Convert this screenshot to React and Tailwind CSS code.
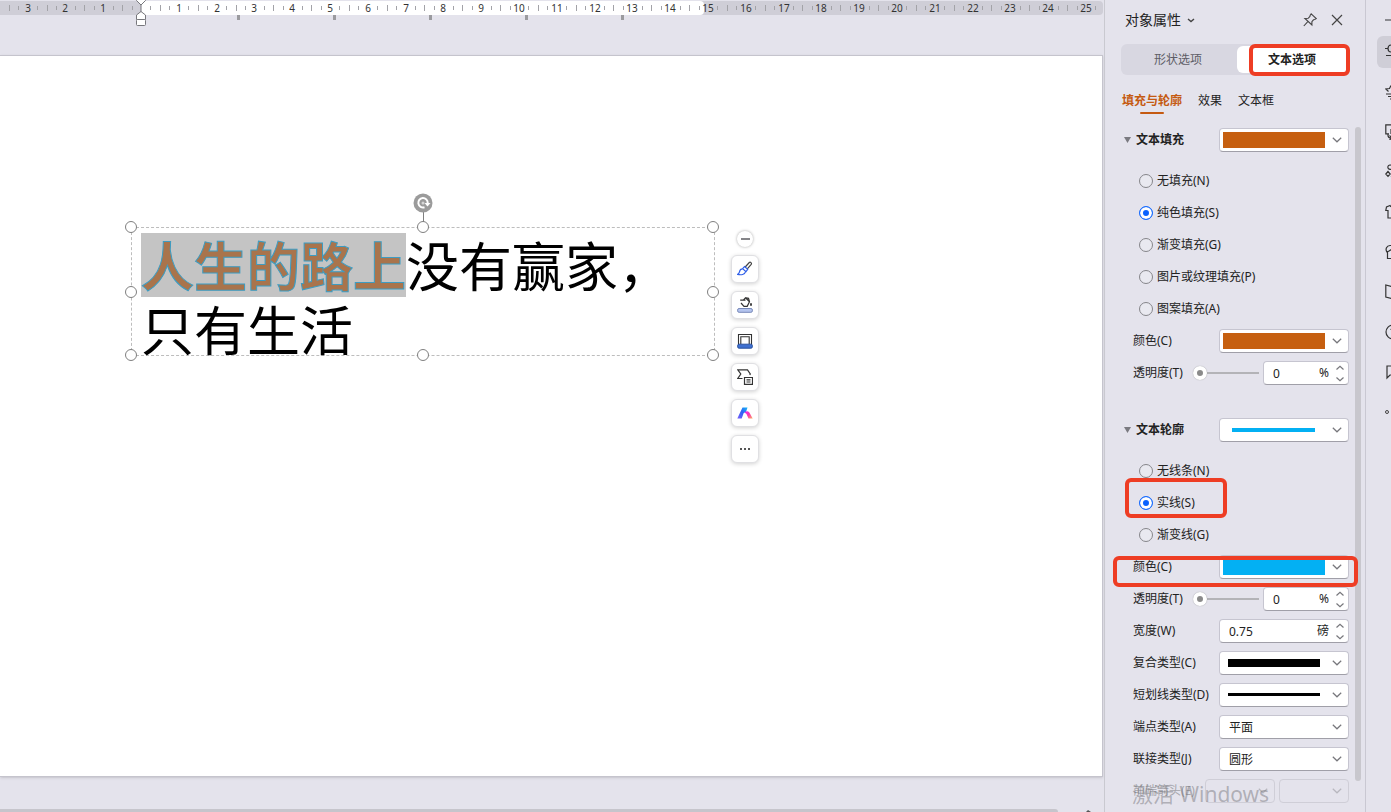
import { useState } from 'react';

const CM = 37.8;
const RULER_ZERO = 141;
const RULER_UNITS = Array.from({ length: 30 }, (_, i) => i - 4);
const TAB_STOPS = [237, 333, 429, 525, 621];

const HANDLES = [
  '-left-[7px] -top-[7px]',
  'left-[285px] -top-[7px]',
  '-right-[5px] -top-[7px]',
  '-left-[7px] top-[58px]',
  '-right-[5px] top-[58px]',
  '-left-[7px] -bottom-[6px]',
  'left-[285px] -bottom-[6px]',
  '-right-[5px] -bottom-[6px]',
];

function Ruler() {
  return (
    <div className="relative mr-px h-[15px] pt-px">
      <div className="relative h-[14px] overflow-hidden rounded-r bg-[#cfced7]">
        <div className="absolute inset-y-0 left-[141px] w-[563px] rounded-r bg-white" />
        {RULER_UNITS.map((n) => {
          const x = RULER_ZERO + n * CM;
          return (
            <div key={n}>
              {n !== 0 && n > -4 && (
                <span
                  className="absolute top-0 w-6 -translate-x-1/2 text-center text-[10px] leading-[14px] text-[#333]"
                  style={{ left: Math.round(x) }}
                >
                  {Math.abs(n)}
                </span>
              )}
              <i className="absolute top-[5px] h-1 w-px bg-[#a3a3a8]" style={{ left: Math.round(x + CM / 4) }} />
              <i className="absolute top-1 h-[6px] w-px bg-[#a3a3a8]" style={{ left: Math.round(x + CM / 2) }} />
              <i className="absolute top-[5px] h-1 w-px bg-[#a3a3a8]" style={{ left: Math.round(x + (CM * 3) / 4) }} />
            </div>
          );
        })}
      </div>
      {TAB_STOPS.map((x) => (
        <i key={x} className="absolute top-[15px] h-[5px] w-[3px] bg-[#9b9b9f]" style={{ left: x }} />
      ))}
      {/* Indent markers */}
      <svg className="absolute left-[136px] top-0 z-10" width="10" height="26" fill="#fff" stroke="#77777c">
        <path d="M5 4v10" />
        <path d="M.5-1v1.5L5 5 9.500.5V-1z" />
        <path d="M.5 19.500V15L5 11.500 9.500 15v4.500z" />
        <rect x=".5" y="19.500" width="9" height="6" rx="1" />
      </svg>
    </div>
  );
}

function ToolButton({ label, children }) {
  return (
    <button
      aria-label={label}
      className="flex size-7 items-center justify-center rounded-md border border-[#e0e0e3] bg-white shadow-[0_1px_4px_rgba(0,0,0,0.18)]"
    >
      {children}
    </button>
  );
}

function FloatingToolbar() {
  return (
    <div className="absolute left-[731px] top-[175px] flex flex-col items-center gap-2">
      <button
        aria-label="收起"
        className="flex size-4 items-center justify-center rounded-full bg-white shadow-[0_0_3px_rgba(0,0,0,0.35)]"
      >
        <span className="h-[2px] w-[9px] bg-[#858589]" />
      </button>
      <ToolButton label="格式刷">
        <svg width="16" height="16" viewBox="0 0 16 16" fill="none" stroke="#444" strokeWidth="1.2">
          <path d="M8.200 6 12.300 1.500c1-.9 2.800.6 1.900 1.900L10.300 7.900" />
          <path stroke="#2f5fe8" d="M7.500 5.500l3.200 2.900-1.700 2.200-3.400-3zM5.500 7.800C3.300 7.600 2.700 9.500 2.400 11.200c-.2 1-.8 1.700-1.800 2.100 3.400 1 7.300.5 8-2.800" />
        </svg>
      </ToolButton>
      <ToolButton label="形状填充">
        <svg width="16" height="16" viewBox="0 0 16 16" fill="none" stroke="#333" strokeWidth="1.200">
          <path d="M3.200 3.200h5.300M6.300 3.200 8.500.8l4 3.900-2.300 4.600H7L4 6M9 .9l2.500.3 1 3.400" />
          <path d="M14 6.200v2.600" strokeWidth="1.800" />
          <rect x=".6" y="11.500" width="14.800" height="3.800" rx="1.500" fill="#b4c4ee" stroke="#7788b8" strokeWidth="1" />
        </svg>
      </ToolButton>
      <ToolButton label="形状轮廓">
        <svg width="16" height="16" viewBox="0 0 16 16" fill="none" stroke="#333" strokeWidth="1.100">
          <path d="M1.500 12V1.500h13V12M3.800 11V3.800h8.400V11" />
          <rect x=".6" y="11.200" width="14.800" height="4" rx="1.500" fill="#3f70d0" stroke="#2b529f" strokeWidth="1" />
        </svg>
      </ToolButton>
      <ToolButton label="更改形状">
        <svg width="16" height="16" viewBox="0 0 16 16" fill="none" stroke="#333" strokeWidth="1.200">
          <path d="M5.500 9.500H.8L3.800 5 .8.800h9.700L13.300 5l-.6 1" />
          <path d="M7.500 8.500h8v6.800h-8zM9.500 10.800h4M9.500 13h4" />
        </svg>
      </ToolButton>
      <ToolButton label="智能助手">
        <svg width="16" height="16" viewBox="0 0 16 16">
          <defs>
            <linearGradient id="blue" x1="1" y1="0" x2="0" y2="1">
              <stop offset="0" stopColor="#18b9f5" />
              <stop offset=".45" stopColor="#2a63f5" />
              <stop offset="1" stopColor="#7a5cf8" />
            </linearGradient>
            <linearGradient id="pink" x1="0" y1="0" x2="1" y2="1">
              <stop offset="0" stopColor="#e22bf0" />
              <stop offset=".5" stopColor="#f837b0" />
              <stop offset="1" stopColor="#ffb25e" />
            </linearGradient>
          </defs>
          <path fill="url(#blue)" d="M5.500 2.500h5L9 7l-2.300 1-2 5.500H.3z" />
          <path fill="url(#pink)" d="M7.500 7.500c1.500-1.500 3.500-1.600 4.700-.3l3.500 6.300h-4.200L9.500 9z" />
        </svg>
      </ToolButton>
      <ToolButton label="更多">
        <svg width="12" height="4" fill="#555">
          <path d="M1 1h2v2H1zM5 1h2v2H5zM9 1h2v2H9z" />
        </svg>
      </ToolButton>
    </div>
  );
}

function TextBox() {
  return (
    <div className="absolute left-[131px] top-[171px] h-[129px] w-[584px] border border-dashed border-[#bdbdbd] pl-[9px] pt-[5px]">
      <p className="whitespace-nowrap text-[53px] leading-[68px] text-black">
        <span className="inline-block h-16 bg-[#c4c4c4] align-top font-bold text-[#a9744c] [-webkit-text-stroke:1px_#3d9cc2]">
          人生的路上
        </span>
        没有赢家，
      </p>
      <p className="-mt-1 whitespace-nowrap text-[53px] leading-[68px] text-black">只有生活</p>
      {HANDLES.map((pos) => (
        <i key={pos} className={`absolute size-3 rounded-full border border-[#7f7f7f] bg-white ${pos}`} />
      ))}
      <svg className="absolute -top-[35px] left-[281px]" width="20" height="30" fill="none">
        <path d="M10.500 18v11" stroke="#7f7f7f" />
        <circle cx="10" cy="10" r="9.500" fill="#9b9b9b" />
        <path d="M11.500 14.200A4.700 4.700 0 1 1 14.700 10" stroke="#fff" strokeWidth="2" />
        <path d="M11.500 10h6l-3 3.500z" fill="#fff" />
        <circle cx="10" cy="10" r="1.500" fill="#d5d5d5" />
      </svg>
    </div>
  );
}

function Chevron({ className = '' }) {
  return (
    <svg className={className} width="10" height="6" fill="none" stroke="#77777c" strokeWidth="1.200">
      <path d="M.8.800 5 4.800 9.200.8" />
    </svg>
  );
}

function Select({ id, label, options = [''], disabled = false, className = 'w-[130px]', children }) {
  return (
    <span className={`relative block h-6 ${className}`}>
      <select
        id={id}
        aria-label={label}
        disabled={disabled}
        className="block size-full appearance-none rounded border border-[#c6c5d0] border-b-[#a09fa8] bg-white pl-[9px] pr-6 pt-px text-xs text-[#222] disabled:border-[#cfced7] disabled:bg-transparent disabled:opacity-100"
      >
        {options.map((o) => (
          <option key={o}>{o}</option>
        ))}
      </select>
      {children}
      <Chevron className={`pointer-events-none absolute right-[7px] top-[9px] ${disabled ? 'opacity-40' : ''}`} />
    </span>
  );
}

function Swatch({ className }) {
  return <span className={`pointer-events-none absolute ${className}`} />;
}

function Spinner({ id, value, unit, className }) {
  const [text, setText] = useState(value);
  return (
    <span className={`flex h-6 items-center rounded border border-[#c6c5d0] border-b-[#a09fa8] bg-white pl-[9px] pr-[3px] ${className}`}>
      <input
        id={id}
        value={text}
        onChange={(e) => setText(e.target.value)}
        className="w-0 flex-1 bg-transparent pt-px text-xs outline-none"
      />
      <span className="mr-[6px]">{unit}</span>
      <span className="flex flex-col gap-[5px]">
        <button aria-label="增加">
          <svg className="block" width="10" height="6" fill="none" stroke="#77777c" strokeWidth="1.200">
            <path d="M1.500 4.500 5 1.200l3.500 3.300" />
          </svg>
        </button>
        <button aria-label="减少">
          <svg className="block" width="10" height="6" fill="none" stroke="#77777c" strokeWidth="1.200">
            <path d="M1.500 1.500 5 4.800l3.500-3.300" />
          </svg>
        </button>
      </span>
    </span>
  );
}

function Row({ id, label, children }) {
  return (
    <div className="relative flex h-8 items-center justify-between pl-3">
      <label htmlFor={id}>{label}</label>
      {children}
    </div>
  );
}

function Transparency({ id }) {
  return (
    <Row id={id} label="透明度(T)">
      <span className="flex items-center gap-1">
        <input
          type="range"
          defaultValue={0}
          aria-label="透明度"
          className="h-4 w-[66px] appearance-none bg-transparent [&::-webkit-slider-runnable-track]:h-[2px] [&::-webkit-slider-runnable-track]:bg-[#b3b3b7] [&::-webkit-slider-thumb]:-mt-[6px] [&::-webkit-slider-thumb]:size-[14px] [&::-webkit-slider-thumb]:appearance-none [&::-webkit-slider-thumb]:rounded-full [&::-webkit-slider-thumb]:border-4 [&::-webkit-slider-thumb]:border-white [&::-webkit-slider-thumb]:bg-[#8a8a8a] [&::-webkit-slider-thumb]:shadow-[0_0_1px_#8a8a90]"
        />
        <Spinner id={id} value="0" unit="%" className="w-[86px]" />
      </span>
    </Row>
  );
}

function RadioRow({ name, label, checked, onChange, children }) {
  return (
    <div className="relative flex h-8 items-center pl-[18px]">
      <label className="flex items-center gap-1">
        <input
          type="radio"
          name={name}
          checked={checked}
          onChange={onChange}
          className="size-[14px] appearance-none rounded-full border border-[#85858a] bg-[#e9e9f0] checked:border-[#1a6dff] checked:bg-[#0a62ff] checked:shadow-[inset_0_0_0_3px_#fff]"
        />
        {label}
      </label>
      {children}
    </div>
  );
}

function SectionHead({ title, children }) {
  return (
    <div className="mb-[9px] flex h-8 items-center">
      <button className="flex items-center gap-[5px] font-bold">
        <svg className="ml-[3px]" width="7" height="6" fill="#7a7a80">
          <path d="M0 0h7L3.500 6z" />
        </svg>
        {title}
      </button>
      <span className="ml-auto">{children}</span>
    </div>
  );
}

// red frame drawn over the settings that matter
function Mark({ className }) {
  return <span className={`pointer-events-none absolute z-10 rounded-md border-4 border-[#ee3d24] ${className}`} />;
}

const FILLS = ['无填充(N)', '纯色填充(S)', '渐变填充(G)', '图片或纹理填充(P)', '图案填充(A)'];
const LINES = ['无线条(N)', '实线(S)', '渐变线(G)'];

function PropertiesPanel() {
  const [fill, setFill] = useState(FILLS[1]);
  const [line, setLine] = useState(LINES[1]);

  return (
    <aside className="relative w-[261px] flex-none overflow-hidden border-l border-[#c9c9d0] pl-4 pr-4 text-xs text-[#222]">
      <header className="mb-1 flex h-10 items-center pl-1 pr-[6px]">
        <button className="flex items-center gap-[6px] text-sm">
          对象属性
          <svg width="8" height="5" fill="none" stroke="#444" strokeWidth="1.400">
            <path d="M1 1l3 2.600L7 1" />
          </svg>
        </button>
        <button aria-label="固定" className="ml-auto mr-[14px]">
          <svg width="14" height="14" viewBox="0 0 14 14" fill="none" stroke="#444" strokeWidth="1.100">
            <path d="M8.200.8 13.200 5.600l-1.500.9-1.200.3-1.600 1.900v3.200l-7-6.500 3.300-.1L6.900 3.500l.3-1.300zM4.600 8.900.8 13" />
          </svg>
        </button>
        <button aria-label="关闭">
          <svg width="12" height="12" fill="none" stroke="#444" strokeWidth="1.200">
            <path d="M1 1l10 10M11 1 1 11" />
          </svg>
        </button>
      </header>

      <div className="relative flex h-[31px] rounded-md bg-[#d8d7e1] p-[2px]">
        <button className="flex-1 pr-1 text-[#5d5d66]">形状选项</button>
        <button className="w-[110px] rounded-md bg-white font-bold">文本选项</button>
        <Mark className="-right-px -bottom-px top-0 w-[101px]" />
      </div>

      <nav className="mb-[7px] mt-[9px] flex h-[33px] items-center gap-4 pl-px">
        <button className="relative flex h-full items-center font-bold text-[#c55a11]">
          填充与轮廓
          <span className="absolute bottom-[3px] left-[18px] h-[2px] w-6 rounded bg-[#c55a11]" />
        </button>
        <button>效果</button>
        <button>文本框</button>
      </nav>

      <section className="mb-[25px]">
        <SectionHead title="文本填充">
          <Select label="文本填充">
            <Swatch className="left-1 top-1 h-4 w-[102px] bg-[#c65f10]" />
          </Select>
        </SectionHead>
        {FILLS.map((f) => (
          <RadioRow key={f} name="fill" label={f} checked={fill === f} onChange={() => setFill(f)} />
        ))}
        <Row id="fill-color" label="颜色(C)">
          <Select id="fill-color">
            <Swatch className="left-1 top-1 h-4 w-[102px] bg-[#c65f10]" />
          </Select>
        </Row>
        <Transparency id="fill-alpha" />
      </section>

      <section>
        <SectionHead title="文本轮廓">
          <Select label="文本轮廓">
            <Swatch className="left-[13px] top-[10px] h-1 w-[83px] bg-[#03b0f3]" />
          </Select>
        </SectionHead>
        {LINES.map((l) => (
          <RadioRow key={l} name="line" label={l} checked={line === l} onChange={() => setLine(l)}>
            {l === LINES[1] && <Mark className="-top-[9px] left-1 h-10 w-[102px]" />}
          </RadioRow>
        ))}
        <Row id="line-color" label="颜色(C)">
          <Select id="line-color">
            <Swatch className="left-1 top-1 h-4 w-[102px] bg-[#03b0f3]" />
          </Select>
          <Mark className="-left-2 -right-[9px] top-[5px] h-[31px]" />
        </Row>
        <Transparency id="line-alpha" />
        <Row id="line-width" label="宽度(W)">
          <Spinner id="line-width" value="0.75" unit="磅" className="w-[130px]" />
        </Row>
        <Row id="compound" label="复合类型(C)">
          <Select id="compound">
            <Swatch className="left-[9px] top-2 h-2 w-[92px] bg-black" />
          </Select>
        </Row>
        <Row id="dash" label="短划线类型(D)">
          <Select id="dash">
            <Swatch className="left-[9px] top-[10px] h-[3px] w-[92px] bg-black" />
          </Select>
        </Row>
        <Row id="cap" label="端点类型(A)">
          <Select id="cap" options={['平面', '方形', '圆形']} />
        </Row>
        <Row id="join" label="联接类型(J)">
          <Select id="join" options={['圆形', '棱台', '斜接']} />
        </Row>
        <div className="flex h-8 items-center pl-3">
          <label htmlFor="arrow" className="text-[#a5a5ab]">前端箭头(E)</label>
          <span className="ml-auto flex gap-1">
            <Select id="arrow" disabled className="w-[70px]" />
            <Select label="箭头大小" disabled className="w-[70px]" />
          </span>
        </div>
      </section>

      <div className="absolute right-1 top-[127px] h-[654px] w-[6px] rounded-full bg-[#c8c7cd]" />
      <p className="pointer-events-none absolute left-[27px] top-[782px] whitespace-nowrap text-[21px] leading-6 text-[#6e6e73]/45">
        激活 Windows
      </p>
    </aside>
  );
}

const RAIL = [
  { name: '属性', d: 'M0 4.500h3M3 4.500a3.500 3.500 0 1 0 7 0 3.500 3.500 0 0 0-7 0M10 4.500h6M1 11.500h14' },
  { name: '动画', d: 'M6 1.500 4.500 4.500.8 5l2.700 2.500M8 1v3M1 10h6M3 12.500h6M5 15h6' },
  { name: '切换', d: 'M14 .8H.8v9H4M6 5v5M3 10v1.500c0 1.500 1 2.500 3 2.500M4.500 11.500 7 14l-2.500 2' },
  { name: '素材', d: 'M5 1a2.200 2.200 0 1 0 .1 4.400A2.200 2.200 0 0 0 5 1M3 7.500.8 10 3 12.300 5.200 10zM6.500 5l6 6M6 12l2 2' },
  { name: '样式', d: 'M5 1.500 1.500 3 .8 6.500H3V14h10V6.500h2L14.500 3 11 1.500c-1 2-5 2-6 0z' },
  { name: '图库', d: 'M5 1.500a4 4 0 0 0-3 6.500l2-1 3-2M2.500 8v6.500h11V6M5 1.500h4' },
  { name: '阅读', d: 'M8 3 .8 1v12L8 15l7-2V1z' },
  { name: '帮助', d: 'M8 1a7 7 0 1 0 0 14A7 7 0 0 0 8 1M6 6c0-2 4-2 4 0' },
  { name: '批注', d: 'M14 2H2v12l3-3h9z' },
];

function SideRail() {
  return (
    <div className="flex w-[26px] flex-none flex-col gap-2 overflow-hidden border-l border-[#c9c8d2] pl-[11px]">
      <span className="ml-2 mt-[19px] h-[2px] w-5 flex-none bg-[#8b8b91]" />
      <nav className="mt-[7px] flex flex-col gap-2">
        {RAIL.map((item, i) => (
          <button
            key={item.name}
            aria-label={item.name}
            className={`flex size-8 items-center justify-center rounded-md ${i === 0 ? 'bg-[#cfced7]' : ''}`}
          >
            <svg width="16" height="16" viewBox="0 0 16 16" fill="none" stroke="#333" strokeWidth="1.200">
              <path d={item.d} />
            </svg>
          </button>
        ))}
        <button aria-label="更多" className="flex size-8 items-center pl-2">
          <svg className="flex-none" width="16" height="4" fill="none" stroke="#444">
            <circle cx="2" cy="2" r="1.500" />
            <circle cx="8" cy="2" r="1.500" />
            <circle cx="14" cy="2" r="1.500" />
          </svg>
        </button>
      </nav>
    </div>
  );
}

export default function App() {
  return (
    <div
      lang="zh-CN"
      className="flex h-screen overflow-hidden bg-[#e4e3ec] font-['Noto_Sans','Noto_Sans_CJK_SC',sans-serif]"
    >
      <main className="flex min-w-0 flex-1 flex-col">
        <Ruler />
        <div className="relative mr-px mt-10 flex-1 border-b border-r border-t border-[#c5c4cd] bg-white shadow-sm">
          <TextBox />
          <FloatingToolbar />
        </div>
        <footer className="flex h-[35px] flex-none items-end justify-between overflow-hidden">
          <div className="mr-7 h-[3px] flex-1 rounded-tr bg-[#c6c5cc]" />
          <svg className="mr-3" width="6" height="2" fill="#555">
            <path d="M0 2 2 0l3 2z" />
          </svg>
        </footer>
      </main>
      <PropertiesPanel />
      <SideRail />
    </div>
  );
}
